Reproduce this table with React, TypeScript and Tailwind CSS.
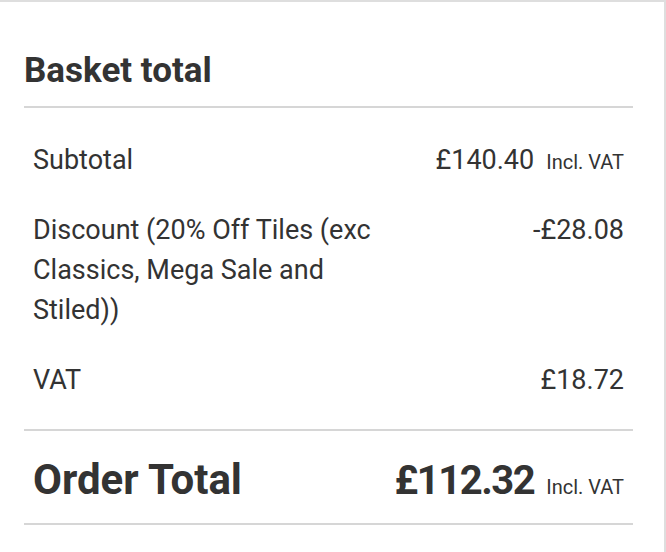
import React from "react";

function Row({ label, value, incl, labelClass = "" }: { label: string; value: string; incl?: boolean; labelClass?: string }) {
  return (
    <div className="flex items-baseline justify-between px-[9px] text-[27px] leading-[40px]">
      <div className={labelClass}>{label}</div>
      <div className="flex items-baseline">
        <span>{value}</span>
        {incl && <span className="ml-3 text-[20px] leading-none">Incl. VAT</span>}
      </div>
    </div>
  );
}

export default function App() {
  return (
    <div className="h-[552px] w-[666px] overflow-hidden bg-white text-[#333333]" style={{ fontFamily: "Roboto, 'Noto Sans', sans-serif" }}>
      <div className="h-full border-t-2 border-r-2 border-[#dedede] pl-6 pr-[31px] pt-[49px]">
        <h2 className="text-[35px] font-bold leading-[40px]">Basket total</h2>
        <div className="mt-[15px] h-[2px] bg-[#d6d6d6]" />
        <div className="mt-[32px] flex flex-col gap-[30px]">
          <Row label="Subtotal" value="£140.40" incl />
          <Row label="Discount (20% Off Tiles (exc Classics, Mega Sale and Stiled))" value="-£28.08" labelClass="w-[360px]" />
          <Row label="VAT" value="£18.72" />
        </div>
        <div className="mt-[29px] h-[2px] bg-[#d6d6d6]" />
        <div className="mt-[25px] flex items-baseline justify-between px-[9px] leading-[48px]">
          <div className="text-[42px] font-bold">Order Total</div>
          <div className="flex items-baseline">
            <span className="text-[40px] font-bold tracking-[-1.5px]">£112.32</span>
            <span className="ml-3 text-[20px] leading-none">Incl. VAT</span>
          </div>
        </div>
        <div className="mt-[18px] h-[2px] bg-[#d6d6d6]" />
      </div>
    </div>
  );
}
